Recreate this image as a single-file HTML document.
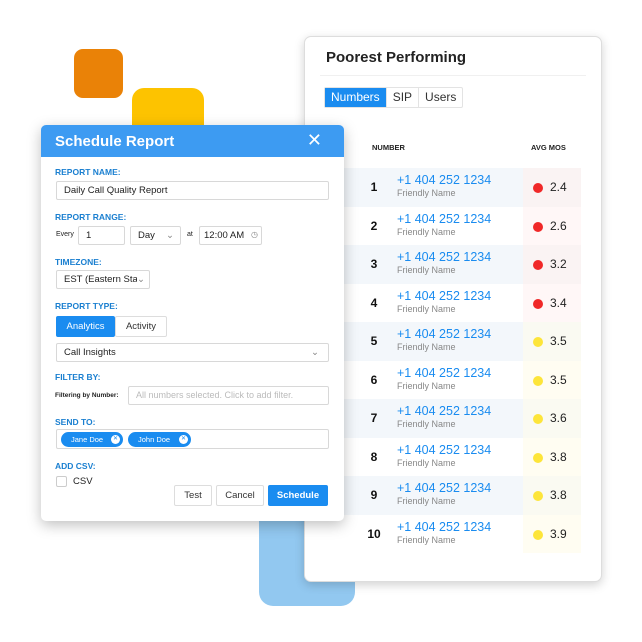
<!DOCTYPE html>
<html><head><meta charset="utf-8"><style>
*{box-sizing:border-box;margin:0;padding:0}
body{width:642px;height:642px;background:#fff;position:relative;overflow:hidden;font-family:"Liberation Sans",sans-serif}
.abs{position:absolute}
.card{left:304px;top:36px;width:298px;height:546px;background:#fff;border:1px solid #ddd;border-radius:7px;box-shadow:0 3px 10px rgba(0,0,0,.18)}
.tabs{left:324px;top:87px;height:21px;display:flex;border:1px solid #e3e3e3;border-radius:2px;font-size:12px}
.tabs div{padding:0 6px;line-height:19px;border-right:1px solid #e3e3e3;color:#333}
.row{position:absolute;left:332px;width:249px;height:38.5px}
.num{position:absolute;left:0;width:84px;text-align:center;top:12px;font-weight:bold;font-size:12px;color:#111}
.ph{position:absolute;left:65px;top:5px;color:#1a8cf0;font-size:12.5px}
.fn{position:absolute;left:65px;top:20px;color:#888;font-size:9px}
.mos{position:absolute;left:191px;width:58px;height:100%;}
.dot{position:absolute;left:10px;top:15px;width:10px;height:10px;border-radius:50%}
.val{position:absolute;left:27px;top:12px;font-size:12px;color:#222}
.modal{left:41px;top:125px;width:303px;height:396px;background:#fff;border-radius:5px;box-shadow:0 4px 14px rgba(0,0,0,.25);overflow:hidden}
.hdr{height:32px;background:#3d9bf2;color:#fff;font-size:15px;padding:8px 14px;font-weight:bold}
.lbl{position:absolute;left:14px;font-size:8.5px;font-weight:bold;color:#1a7fd0}
.inp{position:absolute;border:1px solid #d8d8d8;border-radius:2px;height:19px;font-size:9.5px;color:#222;padding:3px 7px;background:#fff;white-space:nowrap;overflow:hidden}
.btn{position:absolute;height:21px;border:1px solid #ddd;border-radius:2px;font-size:9.5px;text-align:center;line-height:19px;color:#333;background:#fff}
.chip{position:absolute;top:307px;height:15px;background:#1a8cf0;border-radius:8px;color:#fff;font-size:7.5px;line-height:15px;padding-left:10px}
.chip i{position:absolute;right:3px;top:3px;width:9px;height:9px;border-radius:50%;background:#fff;color:#1a8cf0;font-style:normal;font-size:6px;line-height:9px;text-align:center}
</style></head><body>
<div class="abs" style="left:74px;top:49px;width:49px;height:49px;background:#ea8207;border-radius:9px"></div>
<div class="abs" style="left:132px;top:88px;width:72px;height:60px;background:#fdc300;border-radius:12px 12px 0 0"></div>
<div class="abs" style="left:259px;top:505px;width:96px;height:101px;background:#92c8f0;border-radius:0 0 14px 14px"></div>

<div class="abs card"></div>
<div class="abs" style="left:326px;top:49px;font-size:15px;color:#222;font-weight:bold">Poorest Performing</div>
<div class="abs" style="left:320px;top:75px;width:266px;height:1px;background:#f0f0f0"></div>
<div class="abs tabs"><div style="background:#1a8cf0;color:#fff">Numbers</div><div>SIP</div><div style="border:0">Users</div></div>
<div class="abs" style="left:372px;top:143px;font-size:7.5px;font-weight:bold;color:#222">NUMBER</div>
<div class="abs" style="left:531px;top:143px;font-size:7.5px;font-weight:bold;color:#222">AVG MOS</div>

<div id="rows"></div>
<script>
var v=[2.4,2.6,3.2,3.4,3.5,3.5,3.6,3.8,3.8,3.9],h='';
for(var i=0;i<10;i++){var r=i<4;var odd=i%2==0;
h+='<div class="row" style="top:'+(168+i*38.5)+'px;background:'+(odd?'#f3f7fb':'#fff')+'"><div class="num">'+(i+1)+'</div><div class="ph">+1 404 252 1234</div><div class="fn">Friendly Name</div><div class="mos" style="background:'+(r?(odd?'#faf3f3':'#fff7f7'):(odd?'#fafaf2':'#fffdf2'))+'"><div class="dot" style="background:'+(r?'#f02828':'#fde53a')+'"></div><div class="val">'+v[i].toFixed(1)+'</div></div></div>';}
document.getElementById('rows').innerHTML=h;
</script>

<div class="abs modal">
<div class="hdr">Schedule Report<span style="position:absolute;right:22px;top:5px;font-weight:normal;font-size:18px">✕</span></div>
<div class="lbl" style="top:42px">REPORT NAME:</div>
<div class="inp" style="left:15px;top:56px;width:273px">Daily Call Quality Report</div>
<div class="lbl" style="top:87px">REPORT RANGE:</div>
<div class="abs" style="left:15px;top:106px;font-size:7px;color:#222">Every</div>
<div class="inp" style="left:37px;top:101px;width:47px">1</div>
<div class="inp" style="left:89px;top:101px;width:51px">Day<span style="position:absolute;right:6px;color:#888">⌄</span></div>
<div class="abs" style="left:146px;top:106px;font-size:7px;color:#222">at</div>
<div class="inp" style="left:158px;top:101px;width:63px;padding:3px 4px">12:00 AM<span style="position:absolute;right:3px;color:#888;font-size:8px">◷</span></div>
<div class="lbl" style="top:132px">TIMEZONE:</div>
<div class="inp" style="left:15px;top:145px;width:94px">EST (Eastern Sta<span style="position:absolute;right:4px;color:#888;background:#fff">⌄</span></div>
<div class="lbl" style="top:176px">REPORT TYPE:</div>
<div class="btn" style="left:15px;top:191px;width:59px;background:#1a8cf0;color:#fff;border-color:#1a8cf0">Analytics</div>
<div class="btn" style="left:74px;top:191px;width:52px">Activity</div>
<div class="inp" style="left:15px;top:218px;width:273px">Call Insights<span style="position:absolute;right:9px;color:#888">⌄</span></div>
<div class="lbl" style="top:247px">FILTER BY:</div>
<div class="abs" style="left:14px;top:267px;font-size:6.5px;font-weight:bold;color:#222">Filtering by Number:</div>
<div class="inp" style="left:87px;top:261px;width:201px;color:#bbb;font-size:9px">All numbers selected. Click to add filter.</div>
<div class="lbl" style="top:292px">SEND TO:</div>
<div class="inp" style="left:15px;top:304px;width:273px;height:20px"></div>
<div class="chip" style="left:20px;width:62px">Jane Doe<i>✕</i></div>
<div class="chip" style="left:87px;width:63px">John Doe<i>✕</i></div>
<div class="lbl" style="top:336px">ADD CSV:</div>
<div class="abs" style="left:15px;top:351px;width:11px;height:11px;border:1px solid #ccc;border-radius:2px"></div>
<div class="abs" style="left:32px;top:351px;font-size:9.5px;color:#222">CSV</div>
<div class="btn" style="left:133px;top:360px;width:38px">Test</div>
<div class="btn" style="left:175px;top:360px;width:48px">Cancel</div>
<div class="btn" style="left:227px;top:360px;width:60px;background:#1a8cf0;color:#fff;border-color:#1a8cf0;font-weight:bold">Schedule</div>
</div>
</body></html>
